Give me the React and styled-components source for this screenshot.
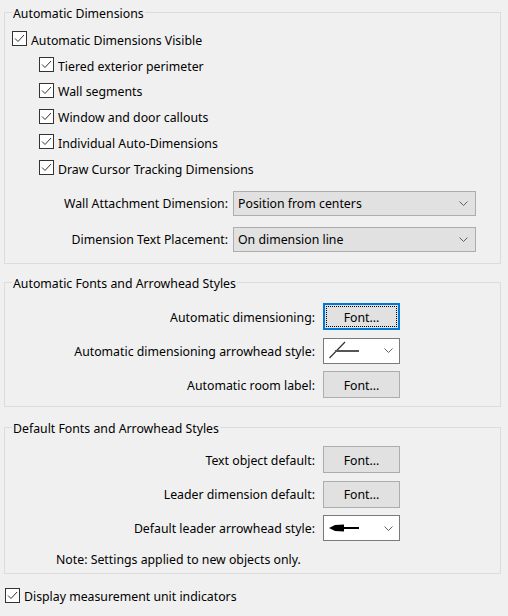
import React from "react";
import styled, { createGlobalStyle } from "styled-components";

const GlobalStyle = createGlobalStyle`
  body {
    margin: 0;
    background: #f0f0f0;
    font-family: "Noto Sans", "Open Sans", sans-serif;
    font-size: 12.3px;
    color: #000;
  }
`;

const Page = styled.div`
  width: 508px;
  height: 616px;
  box-sizing: border-box;
  padding: 12px 0 0 4px;
  overflow: hidden;
`;

const GroupBox = styled.section`
  position: relative;
  width: 497px;
  height: ${(p) => p.$h}px;
  box-sizing: border-box;
  border: 1px solid #dcdcdc;
  margin-top: ${(p) => p.$gap || 0}px;
  padding: ${(p) => p.$pad};
`;

const Legend = styled.span`
  position: absolute;
  top: -8px;
  left: 7px;
  padding: 0 1px;
  background: #f0f0f0;
  line-height: 17px;
`;

const CheckList = styled.div`
  display: grid;
  grid-auto-rows: 25.75px;
  padding-left: 7px;
`;

const CheckRow = styled.label`
  display: flex;
  align-items: center;
  gap: 4px;
  padding-left: ${(p) => (p.$indent ? 27 : 0)}px;
  white-space: nowrap;
`;

const CheckText = styled.span`
  padding-top: 3px;
`;

const Box = styled.span`
  display: inline-flex;
  align-items: center;
  justify-content: center;
  width: 15px;
  height: 15px;
  box-sizing: border-box;
  border: 1px solid #333;
  background: #fff;
  flex: none;
`;

const FormGrid = styled.div`
  display: grid;
  grid-template-columns: ${(p) => p.$cols};
  column-gap: ${(p) => p.$colGap}px;
  row-gap: ${(p) => p.$rowGap}px;
  align-items: center;
  margin-top: ${(p) => p.$top || 0}px;
`;

const Label = styled.span`
  text-align: right;
  white-space: nowrap;
  padding-top: 1px;
`;

const Select = styled.div`
  display: flex;
  align-items: center;
  justify-content: space-between;
  height: 25px;
  box-sizing: border-box;
  border: 1px solid #adadad;
  background: #e1e1e1;
  padding: 1px 7px 0 4px;
`;

const ArrowSelect = styled.div`
  display: flex;
  align-items: center;
  justify-content: space-between;
  height: 26px;
  box-sizing: border-box;
  border: 1px solid #7a7a7a;
  background: #fff;
  padding: 0 6px 0 5px;
`;

const Button = styled.div`
  display: flex;
  align-items: center;
  justify-content: center;
  height: 27px;
  box-sizing: border-box;
  border: ${(p) => (p.$focused ? "2px solid #0078d7" : "1px solid #adadad")};
  background: #e1e1e1;
  padding-top: 1px;
  position: relative;
`;

const FocusRing = styled.span`
  position: absolute;
  inset: 1px;
  border: 1px dotted #000;
`;

const Note = styled.div`
  margin: 10px 0 0 51px;
`;

const BottomRow = styled(CheckRow)`
  margin-top: 11px;
  padding-left: 1px;
`;

const Check = () => (
  <Box>
    <svg width="11" height="9" viewBox="0 0 11 9">
      <path d="M1 4.5 L4 7.5 L10 1" fill="none" stroke="#333" strokeWidth="1" />
    </svg>
  </Box>
);

const Chevron = () => (
  <svg width="9" height="5" viewBox="0 0 9 5">
    <path d="M0.5 0.5 L4.5 4.5 L8.5 0.5" fill="none" stroke="#606060" strokeWidth="1" />
  </svg>
);

const SlashArrow = () => (
  <svg width="31" height="20" viewBox="0 0 31 20">
    <path d="M0.5 17 L16 1" stroke="#333" strokeWidth="1.2" fill="none" />
    <path d="M6 10 L30 10" stroke="#555" strokeWidth="2" fill="none" />
  </svg>
);

const FilledArrow = () => (
  <svg width="31" height="12" viewBox="0 0 31 12">
    <path d="M0 6 L6 3 L15 2.5 L15 9.5 L6 9 Z" fill="#000" />
    <rect x="14" y="5" width="16" height="2" fill="#000" />
  </svg>
);

const subItems = [
  "Tiered exterior perimeter",
  "Wall segments",
  "Window and door callouts",
  "Individual Auto-Dimensions",
  "Draw Cursor Tracking Dimensions",
];

export default function App() {
  return (
    <>
      <GlobalStyle />
      <Page>
        <GroupBox $h={252} $pad="13px 0 0 0">
          <Legend>Automatic Dimensions</Legend>
          <CheckList>
            <CheckRow>
              <Check />
              <CheckText>Automatic Dimensions Visible</CheckText>
            </CheckRow>
            {subItems.map((t) => (
              <CheckRow key={t} $indent>
                <Check />
                <CheckText>{t}</CheckText>
              </CheckRow>
            ))}
          </CheckList>
          <FormGrid $cols="223px 243px" $colGap={5} $rowGap={11} $top={10}>
            <Label>Wall Attachment Dimension:</Label>
            <Select>
              Position from centers
              <Chevron />
            </Select>
            <Label>Dimension Text Placement:</Label>
            <Select>
              On dimension line
              <Chevron />
            </Select>
          </FormGrid>
        </GroupBox>

        <GroupBox $h={125} $gap={18} $pad="20px 0 0 0">
          <Legend>Automatic Fonts and Arrowhead Styles</Legend>
          <FormGrid $cols="310px 77px" $colGap={8} $rowGap={7.5}>
            <Label>Automatic dimensioning:</Label>
            <Button $focused>
              <FocusRing />
              Font...
            </Button>
            <Label>Automatic dimensioning arrowhead style:</Label>
            <ArrowSelect>
              <SlashArrow />
              <Chevron />
            </ArrowSelect>
            <Label>Automatic room label:</Label>
            <Button>Font...</Button>
          </FormGrid>
        </GroupBox>

        <GroupBox $h={147} $gap={20} $pad="18px 0 0 0">
          <Legend>Default Fonts and Arrowhead Styles</Legend>
          <FormGrid $cols="310px 77px" $colGap={8} $rowGap={7.5}>
            <Label>Text object default:</Label>
            <Button>Font...</Button>
            <Label>Leader dimension default:</Label>
            <Button>Font...</Button>
            <Label>Default leader arrowhead style:</Label>
            <ArrowSelect>
              <FilledArrow />
              <Chevron />
            </ArrowSelect>
          </FormGrid>
          <Note>Note: Settings applied to new objects only.</Note>
        </GroupBox>

        <BottomRow>
          <Check />
          <CheckText>Display measurement unit indicators</CheckText>
        </BottomRow>
      </Page>
    </>
  );
}
